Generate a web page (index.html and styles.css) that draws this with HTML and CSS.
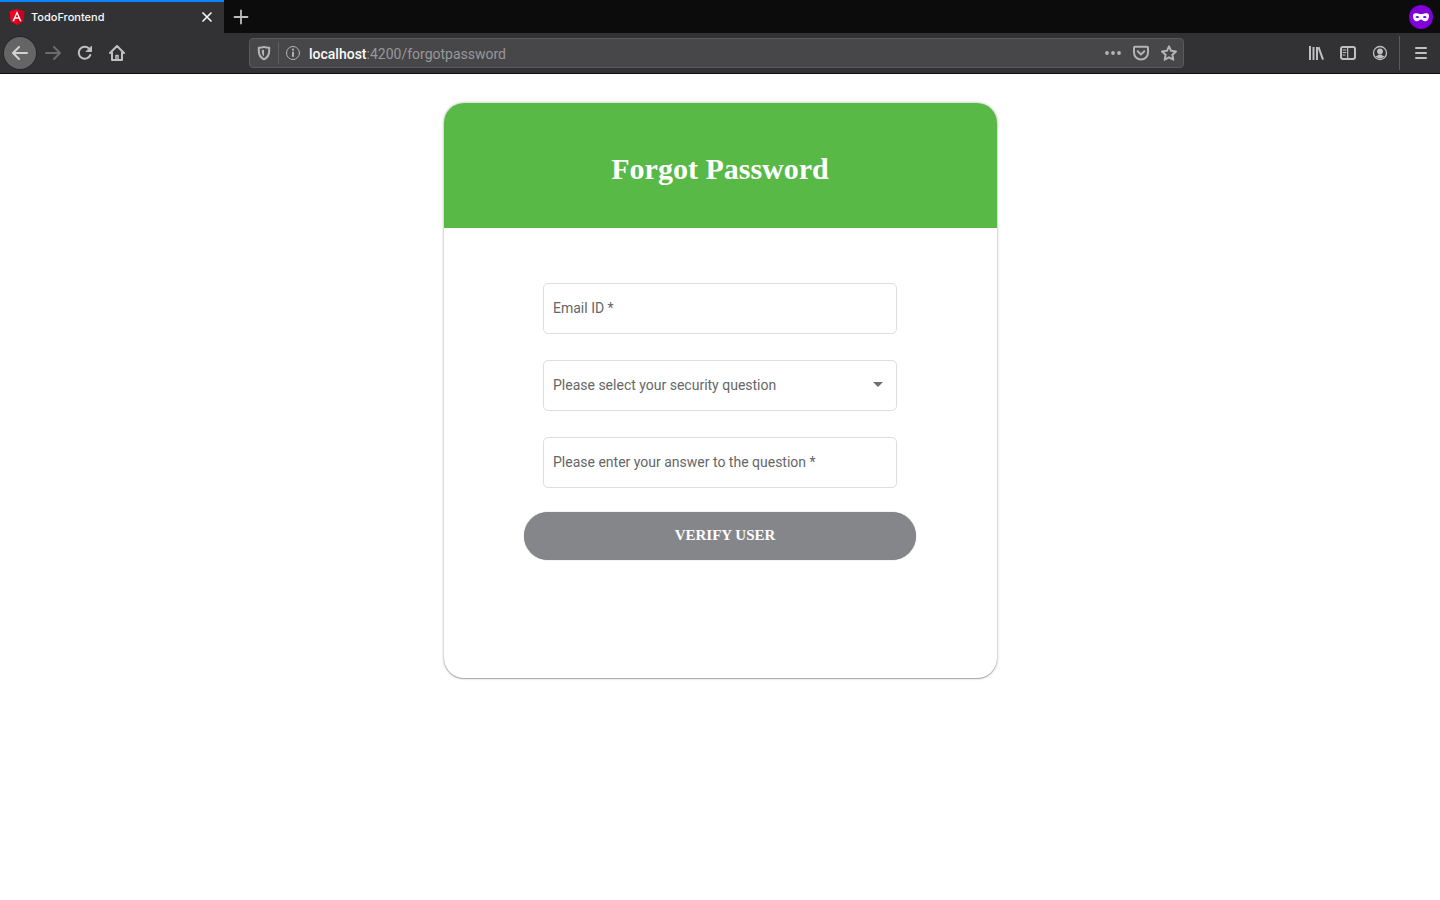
FILE: index.html
```html
<!DOCTYPE html>
<html lang="en">
<head>
<meta charset="utf-8">
<title>TodoFrontend</title>
<link rel="stylesheet" href="styles.css">
</head>
<body>
<header class="browser">
  <div class="tab-strip">
    <div class="tab">
      <svg class="favicon" width="16" height="16" viewBox="0 0 16 16"><path fill="#f5001d" d="M8 0 15.4 2.6 14.3 12.4 8 16 1.7 12.4.6 2.6Z"/><path fill="#c9001f" d="M8 0 15.4 2.6 14.3 12.4 8 16Z"/><path fill="#fff" fill-rule="evenodd" d="M8 1.9 3.4 12.2h1.700l1-2.400h3.800l1 2.400h1.700ZM8 5.100l1.300 3.200H6.700Z"/></svg>
      <span class="tab-title">TodoFrontend</span>
      <button class="tab-close" aria-label="Close tab"><svg width="12" height="12" viewBox="0 0 12 12" stroke="#f4f4f5" stroke-width="1.7" stroke-linecap="round"><path d="m2 2 8 8M10 2l-8 8"/></svg></button>
    </div>
    <button class="new-tab" aria-label="New tab"><svg width="16" height="16" viewBox="0 0 16 16" stroke="#bdbdbe" stroke-width="1.8" stroke-linecap="round"><path d="M8 1.500v13M1.500 8h13"/></svg></button>
    <svg class="private" width="24" height="24" viewBox="0 0 24 24"><circle cx="12" cy="12" r="12" fill="#8000d7"/><path fill="#fff" fill-rule="evenodd" d="M4 10.5C4 8.7 5.5 8.2 7.500 8.200c2 0 3 .9 4.500.9s2.500-.9 4.500-.9c2 0 3.500.5 3.500 2.300 0 3.300-1.500 5.800-3.800 5.800-2 0-2.700-1.800-4.200-1.800s-2.200 1.800-4.200 1.800C5.500 16.300 4 13.800 4 10.500ZM6.300 12.300c.6.900 3.200.9 3.900-.1-.8-1.500-3-1.500-3.900.1Zm7.500-.1c.7 1 3.300 1 3.900.1-.9-1.600-3.100-1.600-3.900-.1Z"/></svg>
  </div>
  <div class="toolbar">
    <nav class="nav">
      <button class="tool back" aria-label="Back"><svg width="16" height="16" viewBox="0 0 16 16" class="line bright"><path d="M15 8H1.500M7 2 1 8l6 6"/></svg></button>
      <button class="tool" aria-label="Forward"><svg width="16" height="16" viewBox="0 0 16 16" class="line dim"><path d="M1 8h13.500M9 2l6 6-6 6"/></svg></button>
      <button class="tool" aria-label="Reload"><svg width="16" height="16" viewBox="0 0 16 16" class="line"><path d="M13.300 10A6 6 0 1 1 12 3.500L14 5.500"/><path d="M14.500 1.500v5h-5Z" fill="#c0c0c1" stroke-width="1"/></svg></button>
      <button class="tool" aria-label="Home"><svg width="16" height="16" viewBox="0 0 16 16" class="line"><path d="m1 8 7-7 7 7M3 7.500V15h10V7.500"/><path d="M7 15v-4.500h2V15" stroke-width="1.500"/></svg></button>
    </nav>
    <div class="url-bar">
      <button class="url-icon" aria-label="Protections"><svg width="16" height="16" viewBox="0 0 16 16" class="line"><path d="M8 1.800C6.300 2.500 4.500 2.700 2.800 2.800v3.200C2.800 10.200 4.800 12.800 8 14.300c3.200-1.500 5.200-4.100 5.200-8.300V2.800C11.500 2.700 9.700 2.500 8 1.800Z"/><path d="M8 4.500V11.500C6.500 10.300 5.700 8.600 5.700 5.200c.8-.1 1.500-.3 2.300-.7Z" fill="#b4b4b5" stroke="none"/></svg></button>
      <span class="url-divider"></span>
      <button class="url-icon" aria-label="Site information"><svg width="16" height="16" viewBox="0 0 16 16" class="line thin"><circle cx="8" cy="8" r="6.500"/><path d="M8 7.500v3.500" stroke-width="2"/><circle cx="8" cy="4.700" r="1.100" fill="#b4b4b5" stroke="none"/></svg></button>
      <span class="address"><b>localhost</b>:4200/forgotpassword</span>
      <button class="url-icon" aria-label="Page actions"><svg width="16" height="16" viewBox="0 0 16 16" fill="#b4b4b5"><circle cx="2" cy="8" r="1.900"/><circle cx="8" cy="8" r="1.900"/><circle cx="14" cy="8" r="1.900"/></svg></button>
      <button class="url-icon" aria-label="Save to Pocket"><svg width="16" height="16" viewBox="0 0 16 16" class="line"><path d="M2 1.800h12c.6 0 1 .4 1 1v4.700a7 7 0 0 1-14 0V2.800c0-.6.400-1 1-1Z"/><path d="M4.700 6.300 8 9.400l3.300-3.100"/></svg></button>
      <button class="url-icon" aria-label="Bookmark"><svg width="16" height="16" viewBox="0 0 16 16" class="line"><path d="m8 1.300 2.100 4.500 4.900.6-3.600 3.400.9 4.900L8 12.300l-4.300 2.400.9-4.900L1 6.400l4.900-.6Z"/></svg></button>
    </div>
    <div class="tools">
      <button class="tool" aria-label="Library"><svg width="16" height="16" viewBox="0 0 16 16" class="line books"><path d="M2 1v14M5.500 2v13M9 2v13M10.500 2.200 15 14.700"/></svg></button>
      <button class="tool" aria-label="Sidebars"><svg width="16" height="16" viewBox="0 0 16 16" class="line"><rect x="1" y="2" width="14" height="12" rx="2"/><path d="M7.700 2v12" stroke-width="1.200"/><path d="M3 5h3M3 7.500h3M3 10h2" stroke-width="1"/></svg></button>
      <button class="tool" aria-label="Account"><svg width="16" height="16" viewBox="0 0 16 16" class="line"><circle cx="8" cy="8" r="6.500" stroke-width="1.300"/><circle cx="8" cy="6.300" r="2.900" fill="#c0c0c1" stroke="none"/><path d="M3.500 11c1 0 2.300-.5 3-1.500h3c.7 1 2 1.500 3 1.500-1.800 3.200-7.200 3.200-9 0Z" fill="#c0c0c1" stroke="none"/></svg></button>
      <span class="tool-divider"></span>
      <button class="tool" aria-label="Menu"><svg width="16" height="16" viewBox="0 0 16 16" class="line"><path d="M3 3h10M3 8h10M3 13h10"/></svg></button>
    </div>
  </div>
</header>
<main class="page">
  <section class="card">
    <h1 class="card-title">Forgot Password</h1>
    <form class="form">
      <input class="field" type="email" aria-label="Email ID" placeholder="Email ID *">
      <div class="select-wrap">
        <select class="field" aria-label="Security question"><option>Please select your security question</option></select>
        <svg class="caret" width="10" height="5" viewBox="0 0 10 5"><path fill="#6f6f6f" d="M0 0h10L5 5Z"/></svg>
      </div>
      <input class="field" type="text" aria-label="Security answer" placeholder="Please enter your answer to the question *">
      <button class="submit" type="button">VERIFY USER</button>
    </form>
  </section>
</main>
</body>
</html>
```
FILE: styles.css
```css
* { box-sizing: border-box; }
body { margin: 0; background: #fff; font-family: Roboto, sans-serif; }
button { padding: 0; border: 0; background: none; }
svg { display: block; flex: none; }

.tab-strip { display: flex; align-items: center; height: 33px; padding-right: 7px; background: #0c0c0d; }
.tab { display: flex; align-items: center; width: 224px; height: 33px; padding: 0 11px 2px 9px; border-top: 2px solid #0a84ff; background: #323234; }
.tab-title { flex: 1; margin-left: 6px; font: 500 11px Inter, sans-serif; color: #f9f9fa; }
.new-tab { margin-left: 9px; }
.private { margin-left: auto; }

.toolbar { display: flex; align-items: center; height: 41px; padding: 0 3px 0 4px; background: #323234; border-bottom: 1px solid #0c0c0d; }
.nav, .tools { display: flex; align-items: center; }
.tool { display: flex; align-items: center; justify-content: center; width: 32px; height: 32px; }
.back { margin-right: 1px; border-radius: 50%; background: #656566; box-shadow: 0 0 0 1px #29292b; }
.line { fill: none; stroke: #c0c0c1; stroke-width: 2; stroke-linecap: round; stroke-linejoin: round; }
.bright { stroke: #d2d2d3; }
.dim { stroke: #6b6b6d; }
.thin { stroke-width: 1; }
.books { stroke-linecap: butt; }
.url-bar { display: flex; flex: 1; align-items: center; gap: 12px; height: 30px; margin: 0 116px; padding: 0 6px; border: 1px solid #5a5a5c; border-radius: 4px; background: #474749; }
.url-bar .line { stroke: #b4b4b5; }
.url-divider { width: 1px; height: 22px; margin: 0 -6px; background: #5f6064; }
.address { flex: 1; margin-left: -4px; padding-top: 2px; font-size: 14px; color: #98989a; white-space: nowrap; }
.address b { font-weight: 500; color: #f9f9fa; }
.tool-divider { width: 1px; height: 34px; margin: 0 5px 0 3px; background: #5a5a5c; }

.page { padding: 29px 16px; }
.card { width: 100%; max-width: 553px; min-height: 575px; margin: 0 auto; overflow: hidden; border-radius: 20px; background: #fff; box-shadow: 0 1px 1px rgba(0, 0, 0, .25), 0 0 3px rgba(0, 0, 0, .35); }
.card-title { margin: 0; padding: 48px 16px 42px; background: #58b947; color: #fff; font: bold 30px/35px "Liberation Serif", serif; text-align: center; }
.form { display: flex; flex-direction: column; gap: 26px; width: 394px; max-width: 100%; margin: 0 auto; padding: 55px 0; }
.select-wrap { position: relative; display: flex; flex-direction: column; }
.field { height: 51px; margin: 0 20px; padding: 0 9px 2px; border: 1px solid #dedede; border-radius: 5px; background: #fff; color: #666; font: 14px Roboto, sans-serif; appearance: none; }
.field::placeholder { color: #666; opacity: 1; }
.caret { position: absolute; top: 22px; right: 34px; pointer-events: none; }
.submit { height: 48px; margin: -2px 1px 0; padding: 0 0 2px 10px; border-radius: 24px; background: #85868a; box-shadow: 0 0 1px #85868a; color: #fff; font: bold 15px "Liberation Serif", serif; }
```
